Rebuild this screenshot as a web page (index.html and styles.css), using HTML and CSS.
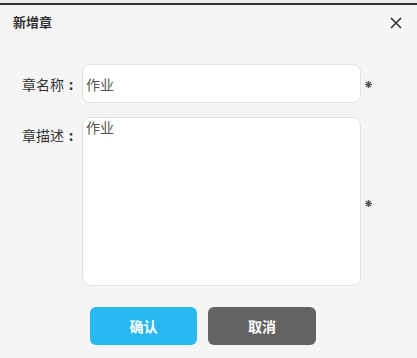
FILE: index.html
```html
<!DOCTYPE html>
<html lang="zh-CN">
<head>
    <meta charset="UTF-8">
    <meta name="viewport" content="width=device-width, initial-scale=1.0">
    <title>新增章</title>
    <link rel="stylesheet" href="styles.css">
</head>
<body>
    <div class="top_bar"></div>
    <div class="dialog">
        <div class="dialog_head">
            <span class="dialog_title">新增章</span>
            <span class="dialog_close">
                <svg width="12" height="12" viewBox="0 0 12 12"><path d="M1 1L11 11M11 1L1 11" stroke="#333" stroke-width="1.6" fill="none"/></svg>
            </span>
        </div>
        <form class="dialog_form">
            <div class="form_row">
                <label class="form_label" for="chapname">章名称<span class="colon">:</span></label>
                <input class="form_input" type="text" id="chapname" value="作业">
                <span class="form_req"><svg width="7" height="7" viewBox="0 0 8 8"><path d="M4 0V8M0 4H8M1.2 1.2L6.8 6.8M6.8 1.2L1.2 6.8" stroke="#555" stroke-width="1.4" fill="none"/></svg></span>
            </div>
            <div class="form_row row_area">
                <label class="form_label" for="chapdesc">章描述<span class="colon">:</span></label>
                <textarea class="form_area" id="chapdesc">作业</textarea>
                <span class="form_req"><svg width="7" height="7" viewBox="0 0 8 8"><path d="M4 0V8M0 4H8M1.2 1.2L6.8 6.8M6.8 1.2L1.2 6.8" stroke="#555" stroke-width="1.4" fill="none"/></svg></span>
            </div>
            <div class="form_btns">
                <button type="button" class="btn btn_ok">确认</button>
                <button type="button" class="btn btn_cancel">取消</button>
            </div>
        </form>
    </div>
</body>
</html>
```

FILE: styles.css
```css
*{margin: 0; padding: 0; box-sizing: border-box;}
body{background: #f5f5f5; font-family: "Noto Sans CJK SC", "Liberation Sans", sans-serif; color: #333; width: 417px; height: 358px; overflow: hidden;}
.top_bar{height: 5px; background: #ececec; border-bottom: 2px solid #333;}
.dialog_head{height: 59px; display: flex; justify-content: space-between; align-items: flex-start; padding: 9px 15px 0 13px;}
.dialog_title{font-size: 13px; font-weight: bold; line-height: 16px;}
.dialog_close{display: flex; width: 12px; height: 12px; margin-top: 3px;}
.dialog_form{display: flex; flex-direction: column;}
.form_row{display: flex; align-items: center;}
.form_label{width: 78px; margin-right: 4px; text-align: right; font-size: 14px; color: #333;}
.colon{display: inline-block; width: 14px; text-align: center; font-weight: bold;}
.form_input{width: 279px; height: 39px; border: 1px solid #e2e2e2; border-radius: 8px; background: #fff; padding: 0 3px; font-family: inherit; font-size: 14px; color: #555; outline: none;}
.form_req{display: flex; margin-left: 4px; padding-top: 2px;}
.row_area{margin-top: 14px; align-items: flex-start;}
.row_area .form_label{margin-top: 8px;}
.form_area{width: 279px; height: 169px; border: 1px solid #e2e2e2; border-radius: 8px; background: #fff; padding: 1px 3px; font-family: inherit; font-size: 14px; line-height: 17px; color: #555; resize: none; outline: none;}
.row_area .form_req{margin-top: 81px;}
.form_btns{display: flex; gap: 11px; margin-top: 21px; padding-left: 90px;}
.btn{width: 107px; height: 38px; border: none; border-radius: 6px; color: #fff; font-family: inherit; font-size: 14px; font-weight: bold; cursor: pointer;}
.btn_ok{background: #29b9f1;}
.btn_cancel{width: 108px; background: #636363;}
```
